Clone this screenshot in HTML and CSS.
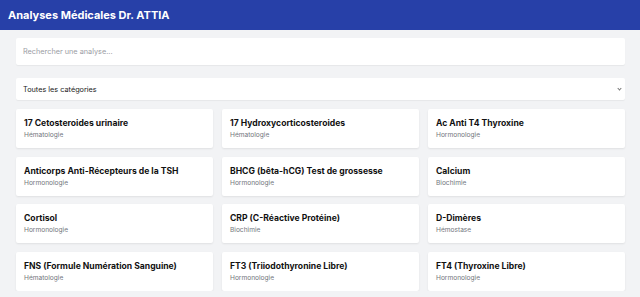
FILE: index.html
```html
<!DOCTYPE html>
<html lang="fr">
<head>
    <meta charset="UTF-8">
    <title>Analyses Médicales Dr. ATTIA</title>
    <link rel="stylesheet" href="styles.css">
</head>
<body>
<header class="top-bar">
    <h1>Analyses Médicales Dr. ATTIA</h1>
</header>

<main class="page">
    <input class="search" type="text" placeholder="Rechercher une analyse...">

    <div class="select-wrap">
        <select class="category-select">
            <option>Toutes les catégories</option>
            <option>Hématologie</option>
            <option>Hormonologie</option>
            <option>Biochimie</option>
            <option>Hémostase</option>
        </select>
    </div>

    <div class="grid">
        <div class="card"><b>17 Cetosteroides urinaire</b><span>Hématologie</span></div>
        <div class="card"><b>17 Hydroxycorticosteroides</b><span>Hématologie</span></div>
        <div class="card"><b>Ac Anti T4 Thyroxine</b><span>Hormonologie</span></div>
        <div class="card"><b>Anticorps Anti-Récepteurs de la TSH</b><span>Hormonologie</span></div>
        <div class="card"><b>BHCG (bêta-hCG) Test de grossesse</b><span>Hormonologie</span></div>
        <div class="card"><b>Calcium</b><span>Biochimie</span></div>
        <div class="card"><b>Cortisol</b><span>Hormonologie</span></div>
        <div class="card"><b>CRP (C-Réactive Protéine)</b><span>Biochimie</span></div>
        <div class="card"><b>D-Dimères</b><span>Hémostase</span></div>
        <div class="card"><b>FNS (Formule Numération Sanguine)</b><span>Hématologie</span></div>
        <div class="card"><b>FT3 (Triiodothyronine Libre)</b><span>Hormonologie</span></div>
        <div class="card"><b>FT4 (Thyroxine Libre)</b><span>Hormonologie</span></div>
    </div>
</main>
</body>
</html>
```

FILE: styles.css
```css
body {
    margin: 0;
    background: #f2f3f5;
    font-family: Inter, "Noto Sans", sans-serif;
    color: #111;
    overflow: hidden;
}

.top-bar {
    background: #2740a8;
    height: 30px;
    display: flex;
    align-items: center;
    padding: 0 8px;
}

.top-bar h1 {
    margin: 0;
    font-size: 11px;
    font-weight: 700;
    color: #fff;
}

.page {
    padding: 8px 15px 0 16px;
}

.search {
    display: block;
    box-sizing: border-box;
    width: 100%;
    height: 27px;
    border: 0;
    border-radius: 2px;
    padding: 0 7px;
    background: #fff;
    box-shadow: 0 1px 1px rgba(0, 0, 0, 0.05);
    font-family: inherit;
    font-size: 7.3px;
    outline: none;
}

.search::placeholder {
    color: #9a9ca3;
}

.select-wrap {
    position: relative;
    margin-top: 13px;
}

.select-wrap::after {
    content: "";
    position: absolute;
    right: 4px;
    top: 9px;
    width: 2px;
    height: 2px;
    border-right: 1px solid #777;
    border-bottom: 1px solid #777;
    transform: rotate(45deg);
}

.category-select {
    display: block;
    box-sizing: border-box;
    width: 100%;
    height: 22px;
    border: 0;
    border-radius: 2px;
    padding: 0 7px;
    background: #fff;
    box-shadow: 0 1px 1px rgba(0, 0, 0, 0.05);
    font-family: inherit;
    font-size: 7.3px;
    color: #1a1a1a;
    -webkit-appearance: none;
    appearance: none;
    outline: none;
}

.grid {
    margin-top: 9px;
    display: grid;
    grid-template-columns: repeat(3, 1fr);
    gap: 8.6px 9px;
}

.card {
    background: #fff;
    border-radius: 2px;
    box-shadow: 0 1px 2px rgba(0, 0, 0, 0.08);
    padding: 8px;
    height: 39px;
    box-sizing: border-box;
}

.card b {
    display: block;
    font-size: 8.6px;
    line-height: 12px;
    font-weight: 700;
    color: #111;
}

.card span {
    display: block;
    margin-top: 2px;
    font-size: 6.6px;
    line-height: 9px;
    color: #73767d;
}
```
